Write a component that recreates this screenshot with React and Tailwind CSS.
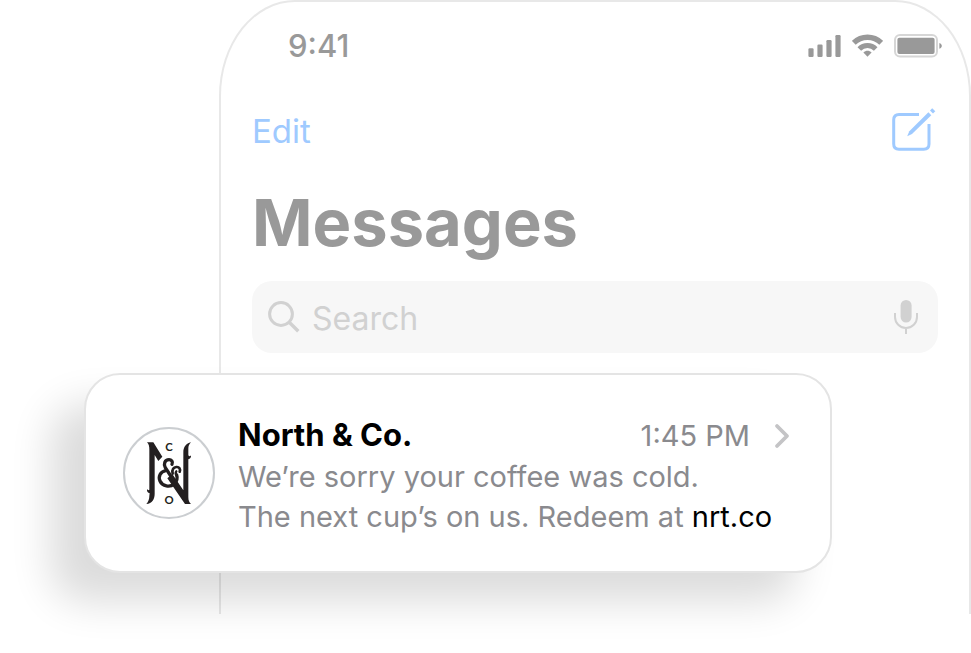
import React from 'react';

function SignalIcon() {
  return (
    <svg width="33" height="24" viewBox="0 0 33 24" fill="currentColor">
      <rect x="0.4" y="14.3" width="5.2" height="8.7" rx="1.2" />
      <rect x="9.4" y="10.6" width="5.2" height="12.4" rx="1.2" />
      <rect x="18.4" y="6" width="5.2" height="17" rx="1.2" />
      <rect x="27.4" y="1" width="5.2" height="22" rx="1.2" />
    </svg>
  );
}

function WifiIcon() {
  return (
    <svg width="31" height="24" viewBox="0 0 31 24" fill="none" stroke="currentColor">
      <path d="M1.8 8.8A19.5 19.5 0 0 1 29.2 8.8" strokeWidth="5.4" />
      <path d="M7.3 15A11.5 11.5 0 0 1 23.7 15" strokeWidth="5" />
      <path
        d="M11.4 18.4C13.8 16.2 17.2 16.2 19.6 18.4L15.5 22.7Z"
        fill="currentColor"
        stroke="none"
      />
    </svg>
  );
}

function BatteryIcon() {
  return (
    <svg width="49" height="24" viewBox="0 0 49 24">
      <rect x="1" y="1" width="42" height="21.6" rx="5" fill="none" stroke="#d6d6d6" strokeWidth="2" />
      <rect x="3.4" y="3.7" width="37.2" height="16.2" rx="2" fill="currentColor" />
      <path d="M45.4 9v5.8c3.2-1 3.2-4.8 0-5.8Z" fill="currentColor" />
    </svg>
  );
}

function ComposeIcon() {
  return (
    <svg width="44" height="44" viewBox="0 0 44 44" fill="none" stroke="currentColor">
      <path
        d="M27 6.4H7Q1.7 6.4 1.7 11.7V36Q1.7 41.3 7 41.3H31.7Q37 41.3 37 36V16"
        strokeWidth="3"
      />
      <path d="M15.2 28.2L17.3 23.2L36.4 4.2L39.3 7.2L20 26Z" fill="currentColor" stroke="none" />
      <path d="M38 2.6L40.2 .3L43.3 3.2L41 5.6Z" fill="currentColor" stroke="none" />
    </svg>
  );
}

function SearchIcon() {
  return (
    <svg width="32" height="32" viewBox="0 0 32 32" fill="none" stroke="currentColor">
      <circle cx="13" cy="13" r="11.4" strokeWidth="3" />
      <path d="M21 21L30.3 30.3" strokeWidth="3.4" />
    </svg>
  );
}

function MicIcon() {
  return (
    <svg width="24" height="34" viewBox="0 0 24 34" fill="none" stroke="currentColor">
      <rect x="6.6" y="0" width="11" height="22.6" rx="5.5" fill="currentColor" stroke="none" />
      <path d="M1 13v4a11 11 0 0 0 22 0v-4M12 28v6" strokeWidth="2" />
    </svg>
  );
}

function ChevronIcon() {
  return (
    <svg width="16" height="26" viewBox="0 0 16 26" fill="none" stroke="currentColor">
      <path d="M3 3L13 13L3 23" strokeWidth="3.8" strokeLinecap="round" strokeLinejoin="round" />
    </svg>
  );
}

function Logo() {
  return (
    <svg
      className="shrink-0"
      width="92"
      height="92"
      viewBox="39 36 276 276"
      role="img"
      aria-label="North & Co. logo"
    >
      <circle cx="177" cy="174" r="135" fill="#fff" stroke="#cbced1" strokeWidth="6" />
      <g fill="#231f20">
        <path d="M111 82H130L157 125L145 138L134 120V236C134 252 127 265 109 267C115 260 118 252 118 243L119 235C114 234 110 229 111 223C114 226 117 226 118 224V104C118 95 117 87 111 82Z" />
        <path d="M243 82C237 88 235 93 235 101V121C238 125 241 124 243 121C244 127 240 132 235 133V246C235 257 238 263 243 267H225L172 190L187 177L220 226V112C220 96 228 86 243 82Z" />
      </g>
      <g fill="none" stroke="#231f20" strokeLinecap="round">
        <path d="M186 148C190 140 184 134 177 134C164 134 160 147 166 158L190 195" strokeWidth="10" />
        <path d="M167 167C151 170 144 185 150 198C157 214 180 218 192 207C201 199 203 189 200 180" strokeWidth="10" />
        <path d="M188 176C185 163 191 157 199 156C208 155 212 162 209 170" strokeWidth="8" />
        <path d="M200 182C197 178 196 173 199 169" strokeWidth="7" />
      </g>
      <g
        fill="#231f20"
        fontFamily="Lato, sans-serif"
        fontWeight="700"
        fontSize="34"
        textAnchor="middle"
      >
        <text x="177" y="107">C</text>
        <text x="177" y="267">O</text>
      </g>
    </svg>
  );
}

function Phone() {
  return (
    <section className="col-start-1 row-start-1 ml-[219px] min-h-[614px] rounded-tl-[76px_96px] rounded-tr-[76px_96px] border-2 border-b-0 border-[#e8e8e8] px-[31px] pt-6">
      <div className="flex h-10 items-center justify-between pl-9 text-[#999]">
        <span className="text-[31px] leading-10 font-medium">9:41</span>
        <div className="-mr-[5px] flex items-center gap-[11px]">
          <SignalIcon />
          <WifiIcon />
          <BatteryIcon />
        </div>
      </div>

      <div className="mt-10 flex h-12 items-center justify-between text-[#9fcaff]">
        <button type="button" className="pt-0.5 text-[33px] leading-10">
          Edit
        </button>
        <button type="button" aria-label="New message" className="mr-0.5">
          <ComposeIcon />
        </button>
      </div>

      <h1 className="mt-[29px] text-[65px] leading-[80px] font-bold text-[#999]">Messages</h1>

      <label className="mt-[18px] flex h-[72px] items-center rounded-[20px] bg-[#f7f7f7] px-4 text-[#d1d1d1]">
        <SearchIcon />
        <input
          type="search"
          aria-label="Search"
          placeholder="Search"
          className="ml-3 min-w-0 flex-1 bg-transparent pt-1 text-[32px] leading-10 outline-none placeholder:text-[#d1d1d1]"
        />
        <button type="button" aria-label="Dictate" className="mr-1">
          <MicIcon />
        </button>
      </label>
    </section>
  );
}

function MessageCard() {
  return (
    <article className="relative col-start-1 row-start-1 mt-[373px] mr-[139px] ml-[84px] flex items-center gap-[23px] self-start rounded-[36px] border-2 border-[#e4e4e4] bg-white py-[34px] pr-10 pl-[37px] shadow-[-34px_30px_40px_-1px_rgba(0,0,0,0.14)]">
      <Logo />
      <div className="min-w-0 flex-1 pt-1.5 text-[#8a8a8e]">
        <div className="flex items-center">
          <div className="flex flex-1 items-baseline justify-between">
            <h2 className="text-[31px] leading-10 font-bold text-black">North &amp; Co.</h2>
            <time className="text-[29px] leading-10">1:45 PM</time>
          </div>
          <span className="ml-6 text-[#c4c4c6]">
            <ChevronIcon />
          </span>
        </div>
        <p className="mt-px text-[29px] leading-10 whitespace-nowrap">
          We’re sorry your coffee was cold.
          <br />
          The next cup’s on us. Redeem at{' '}
          <a href="#nrt" className="text-black">
            nrt.co
          </a>
        </p>
      </div>
    </article>
  );
}

export default function App() {
  return (
    <main className="grid min-h-screen content-start bg-white font-['Inter',sans-serif]">
      <Phone />
      <MessageCard />
    </main>
  );
}
